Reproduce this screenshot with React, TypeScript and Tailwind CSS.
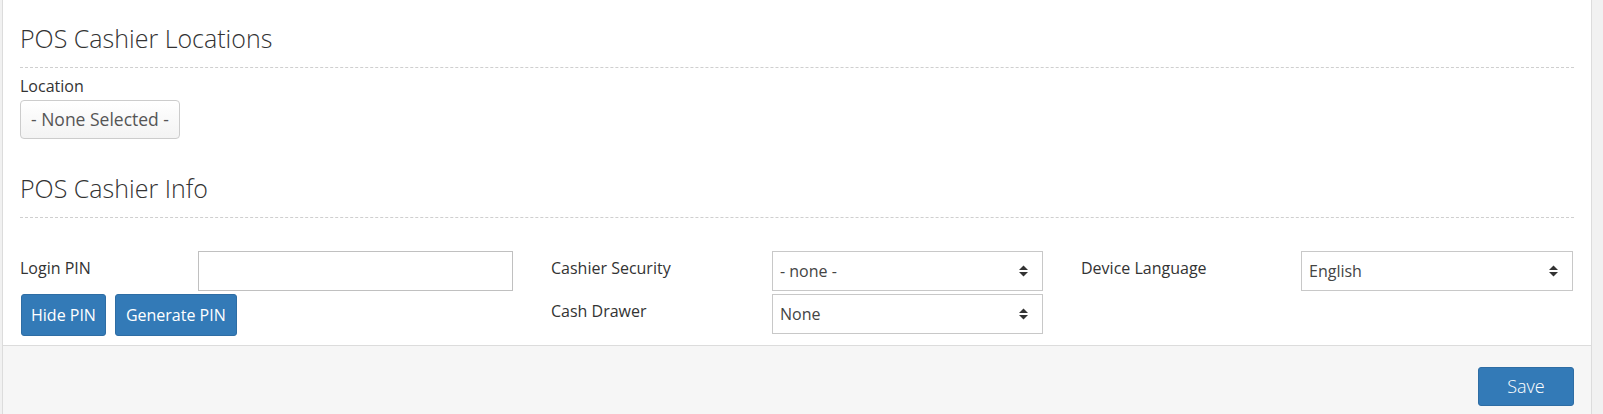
import React from 'react';

const font = { fontFamily: '"Open Sans", "Liberation Sans", sans-serif' };

function Caret() {
  return (
    <svg width="11" height="14" viewBox="0 0 11 14" className="text-[#333]">
      <path d="M5.5 1.5 L10 6 L1 6 Z" fill="currentColor" />
      <path d="M1 8 L10 8 L5.5 12.5 Z" fill="currentColor" />
    </svg>
  );
}

function FakeSelect({ value }: { value: string }) {
  return (
    <div className="flex h-[40px] items-center justify-between border border-[#c8c8c8] bg-white pl-[7px] pr-[13px] text-[16px] text-[#444]">
      <span>{value}</span>
      <Caret />
    </div>
  );
}

function SectionTitle({ children }: { children: React.ReactNode }) {
  return (
    <h3 className="h-[47px] border-b border-dashed border-[#cfcfcf] pb-[10px] text-[25px] leading-[35px] font-light text-[#333]">
      {children}
    </h3>
  );
}

export default function App() {
  return (
    <div className="flex h-[414px] w-full bg-[#f1f1f1] pl-[2px] pr-[11px]" style={font}>
      <div className="flex flex-1 flex-col border-x border-[#dcdcdc] bg-white">
        <div className="px-[17px] pt-[21px] pb-[9px]">
          <SectionTitle>POS Cashier Locations</SectionTitle>
          <label className="mt-[8px] block text-[16px] leading-[21px] text-[#333]">Location</label>
          <button className="mt-[3px] h-[39px] w-[160px] rounded-[4px] border border-[#cccccc] bg-gradient-to-b from-white to-[#f3f3f3] text-[17.5px] text-[#555]">
            - None Selected -
          </button>

          <div className="mt-[32px]">
            <SectionTitle>POS Cashier Info</SectionTitle>
          </div>

          <div className="mt-[33px] flex text-[16px] leading-[22px] text-[#333]">
            <div className="w-[531px]">
              <div className="flex h-[40px]">
                <span className="w-[178px] pt-[6px]">Login PIN</span>
                <input className="h-[40px] w-[315px] border border-[#c0c0c0] bg-white outline-none" />
              </div>
              <div className="mt-[3px] ml-[1px] flex gap-[9px]">
                <button className="h-[42px] rounded-[3px] border border-[#2e6da4] bg-[#337ab7] px-[9px] text-[16px] text-white">
                  Hide PIN
                </button>
                <button className="h-[42px] rounded-[3px] border border-[#2e6da4] bg-[#337ab7] px-[10px] text-[16px] text-white">
                  Generate PIN
                </button>
              </div>
            </div>
            <div className="w-[530px]">
              <div className="flex">
                <span className="w-[221px] pt-[6px]">Cashier Security</span>
                <div className="w-[271px]">
                  <FakeSelect value="- none -" />
                </div>
              </div>
              <div className="mt-[3px] flex">
                <span className="w-[221px] pt-[6px]">Cash Drawer</span>
                <div className="w-[271px]">
                  <FakeSelect value="None" />
                </div>
              </div>
            </div>
            <div className="flex-1">
              <div className="flex">
                <span className="w-[220px] pt-[6px]">Device Language</span>
                <div className="w-[272px]">
                  <FakeSelect value="English" />
                </div>
              </div>
            </div>
          </div>
        </div>
        <div className="flex flex-1 justify-end border-t border-[#dcdcdc] bg-[#f6f6f6] pt-[21px] pr-[17px]">
          <button className="h-[39px] w-[96px] rounded-[3px] border border-[#2e6da4] bg-[#337ab7] text-[18px] font-light text-white">
            Save
          </button>
        </div>
      </div>
    </div>
  );
}
